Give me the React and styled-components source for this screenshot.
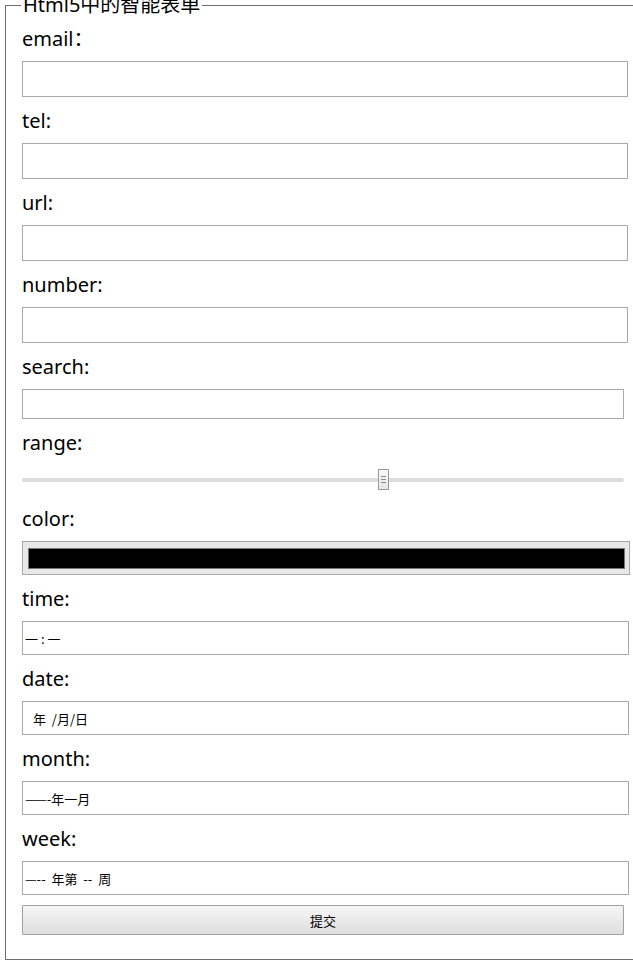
import React from 'react';
import styled, { createGlobalStyle } from 'styled-components';

const GlobalStyle = createGlobalStyle`
    html, body {
        margin: 0;
        padding: 0;
        background: #fff;
        overflow: hidden;
    }
    body {
        font-family: "Noto Sans", "Noto Sans CJK SC", sans-serif;
        color: #000;
    }
`;

const FormSet = styled.fieldset`
    width: 620px;
    margin: -7px 0 0 5px;
    padding: 8px 16px 24px 16px;
    border: 1px solid #6e6e6e;
    box-sizing: content-box;
`;

const Legend = styled.legend`
    font-size: 20px;
    line-height: 24px;
    padding: 0 2px;
    margin-left: -1px;
`;

const Field = styled.div`
    display: flex;
    flex-direction: column;
    align-items: flex-start;
    margin-bottom: 10px;
`;

const Label = styled.label`
    font-size: 20px;
    line-height: 28px;
    height: 28px;
`;

const TextBox = styled.input`
    box-sizing: border-box;
    margin-top: 8px;
    width: ${p => p.$w}px;
    height: ${p => p.$h}px;
    border: 1px solid #a9a9a9;
    padding: 0 3px;
    font: 13px "Noto Sans", "Noto Sans CJK SC", sans-serif;
    outline: none;
    background: #fff;
`;

const PickerBox = styled.div`
    box-sizing: border-box;
    margin-top: 8px;
    width: 607px;
    height: 34px;
    border: 1px solid #a9a9a9;
    display: flex;
    align-items: center;
    padding-left: ${p => p.$indent}px;
    font: 13px "Noto Sans CJK SC", "Noto Sans", sans-serif;
    white-space: pre;
    color: #000;
`;

const RangeWrap = styled.div`
    position: relative;
    margin-top: 8px;
    width: 602px;
    height: 30px;
    display: flex;
    align-items: center;
`;

const Track = styled.div`
    width: 100%;
    height: 4px;
    background: #dcdcdc;
    border-radius: 2px;
`;

const Thumb = styled.div`
    position: absolute;
    top: 4px;
    width: 11px;
    height: 21px;
    box-sizing: border-box;
    margin-left: -5px;
    border: 1px solid #9a9a9a;
    background: linear-gradient(#f8f8f8, #e6e6e6);
    display: flex;
    flex-direction: column;
    justify-content: center;
    align-items: center;
    gap: 2px;

    span {
        display: block;
        width: 5px;
        height: 1px;
        background: #8c8c8c;
    }
`;

const ColorBox = styled.div`
    box-sizing: border-box;
    margin-top: 8px;
    width: 608px;
    height: 34px;
    border: 1px solid #a9a9a9;
    background: #e8e8e8;
    padding: 6px 4px 5px 5px;
`;

const Swatch = styled.div`
    width: 100%;
    height: 100%;
    background: #000;
    border: 1px solid #777;
    box-sizing: border-box;
`;

const SubmitButton = styled.button`
    display: block;
    box-sizing: border-box;
    width: 602px;
    height: 30px;
    border: 1px solid #a0a0a0;
    border-radius: 1px;
    background: linear-gradient(#f6f6f6, #dedede);
    font: 13px "Noto Sans CJK SC", "Noto Sans", sans-serif;
    color: #000;
    padding: 0;
`;

const textFields = [
    { label: 'email：', type: 'email', h: 36, w: 606 },
    { label: 'tel:', type: 'tel', h: 36, w: 606 },
    { label: 'url:', type: 'url', h: 36, w: 606 },
    { label: 'number:', type: 'number', h: 36, w: 606 },
    { label: 'search:', type: 'search', h: 30, w: 602 },
];

const pickers = [
    { label: 'month:', text: '——-年一月', indent: 2 },
    { label: 'week:', text: '—--  年第  --  周', indent: 2 },
];

const App = () => {
    const rangeValue = 60;
    return (
        <>
            <GlobalStyle />
            <form onSubmit={e => e.preventDefault()}>
                <FormSet>
                    <Legend>Html5中的智能表单</Legend>
                    {textFields.map(f => (
                        <Field key={f.label}>
                            <Label>{f.label}</Label>
                            <TextBox type="text" $w={f.w} $h={f.h} />
                        </Field>
                    ))}
                    <Field>
                        <Label>range:</Label>
                        <RangeWrap>
                            <Track />
                            <Thumb style={{ left: `${rangeValue}%` }}>
                                <span /><span /><span />
                            </Thumb>
                        </RangeWrap>
                    </Field>
                    <Field>
                        <Label>color:</Label>
                        <ColorBox><Swatch /></ColorBox>
                    </Field>
                    <Field>
                        <Label>time:</Label>
                        <PickerBox $indent={2}>一 : 一</PickerBox>
                    </Field>
                    <Field>
                        <Label>date:</Label>
                        <PickerBox $indent={10}>年  /月/日</PickerBox>
                    </Field>
                    {pickers.map(p => (
                        <Field key={p.label}>
                            <Label>{p.label}</Label>
                            <PickerBox $indent={p.indent}>{p.text}</PickerBox>
                        </Field>
                    ))}
                    <SubmitButton type="submit">提交</SubmitButton>
                </FormSet>
            </form>
        </>
    );
};

export default App;
